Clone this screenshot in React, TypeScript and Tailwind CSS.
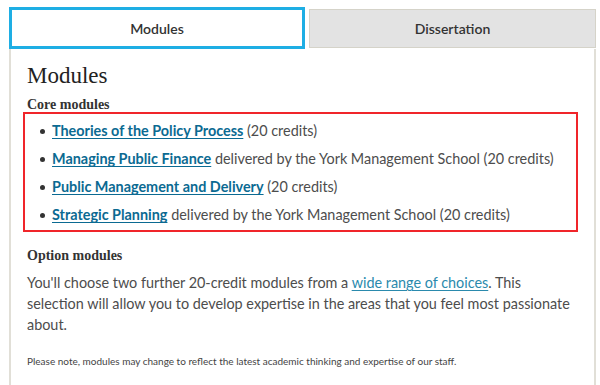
const modules = [
  { name: "Theories of the Policy Process", rest: " (20 credits)" },
  { name: "Managing Public Finance", rest: " delivered by the York Management School (20 credits)" },
  { name: "Public Management and Delivery", rest: " (20 credits)" },
  { name: "Strategic Planning", rest: " delivered by the York Management School (20 credits)" },
];

export default function App() {
  return (
    <div className="h-[385px] w-[600px] overflow-hidden bg-white font-['Lato',sans-serif] text-[#4d4d4d]">
      <div className="ml-[9px] mr-[4px] pt-[7px]">
        <div className="flex items-start gap-[4px]">
          <div className="flex h-[42px] w-[296px] items-center justify-center border-[3px] border-[#1eaee4] text-[14px] font-semibold text-[#333]">
            Modules
          </div>
          <div className="mt-[2px] flex h-[39px] flex-1 items-center justify-center border border-[#d5d3c9] bg-[#e3e3e3] text-[14px] font-semibold text-[#333]">
            Dissertation
          </div>
        </div>
        <div className="h-[340px] border-x-[2px] border-[#e1dfd7] px-[16px] pt-[13px]">
          <h2 className="font-['Liberation_Serif',serif] text-[23px] font-medium leading-[28px] text-[#222]">
            Modules
          </h2>
          <h3 className="mt-[6px] font-['Liberation_Serif',serif] text-[14px] font-bold leading-[18px] text-[#333]">
            Core modules
          </h3>
          <div className="-ml-[4px] -mt-[2px] w-[555px] border-2 border-[#f0252a] pb-[1px] pt-[3px]">
            <ul className="pl-[15px]">
              {modules.map((m) => (
                <li key={m.name} className="flex h-[28px] items-center text-[14.4px]">
                  <span className="mr-[7px] inline-block h-[5px] w-[5px] rounded-full bg-[#333]" />
                  <a href="#" className="font-bold text-[#0b6a92] underline decoration-[1px] underline-offset-[2px]">
                    {m.name}
                  </a>
                  <span className="whitespace-pre">{m.rest}</span>
                </li>
              ))}
            </ul>
          </div>
          <h3 className="mt-[15px] font-['Liberation_Serif',serif] text-[14px] font-bold leading-[18px] text-[#333]">
            Option modules
          </h3>
          <p className="mt-[7px] text-[14.4px] leading-[21px]">
            You'll choose two further 20-credit modules from a{" "}
            <a href="#" className="text-[#2a8aad] underline underline-offset-[2px]">
              wide range of choices
            </a>
            . This selection will allow you to develop expertise in the areas that you feel most passionate about.
          </p>
          <p className="mt-[19px] text-[10px] leading-[14px] text-[#444]">
            Please note, modules may change to reflect the latest academic thinking and expertise of our staff.
          </p>
        </div>
      </div>
    </div>
  );
}
